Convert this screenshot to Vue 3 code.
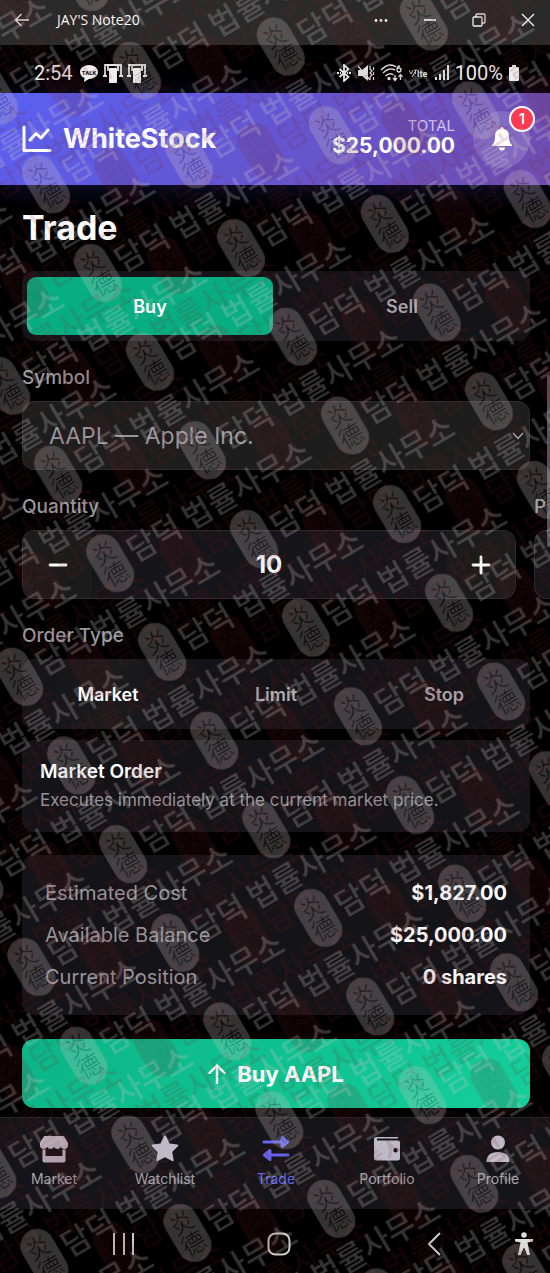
<script setup>
import { ref, computed } from 'vue'

const side = ref('Buy')
const symbol = ref('AAPL')
const quantity = ref(10)
const price = ref('')
const orderType = ref('Market')

const symbols = [
  { code: 'AAPL', name: 'Apple Inc.' },
  { code: 'MSFT', name: 'Microsoft Corp.' },
]
const orderTypes = ['Market', 'Limit', 'Stop']
const summary = computed(() => [
  { label: 'Estimated Cost', value: '$' + (quantity.value * 182.7).toLocaleString('en-US', { minimumFractionDigits: 2, maximumFractionDigits: 2 }) },
  { label: 'Available Balance', value: '$25,000.00' },
  { label: 'Current Position', value: '0 shares' },
])
const tabs = [
  { id: 'shop', label: 'Market' },
  { id: 'star', label: 'Watchlist' },
  { id: 'swap', label: 'Trade' },
  { id: 'wallet', label: 'Portfolio' },
  { id: 'person', label: 'Profile' },
]
const layers = [
  { id: 'red', origin: '170 265' },
  { id: 'grey', origin: '98 273' },
]
const marks = [[18, 31], [154, 82], [-118, 82], [154, -21], [-118, -21]]
</script>

<template>
  <div class="screen">
    <div class="titlebar">
      <button class="plain" aria-label="Back">
        <svg width="16" height="14" viewBox="0 0 16 14" fill="none" stroke="#f4f4f4" stroke-width="1.4"><path d="M15 7H1.5M7.5 1 1.5 7l6 6" /></svg>
      </button>
      <span class="device">JAY'S Note20</span>
      <div class="window-actions">
        <button class="plain" aria-label="More">
          <svg width="14" height="14" viewBox="0 0 14 14" fill="#eee"><circle cx="2" cy="7.500" r="1.400" /><circle cx="7" cy="7.500" r="1.400" /><circle cx="12" cy="7.500" r="1.400" /></svg>
        </button>
        <button class="plain" aria-label="Minimize">
          <svg width="14" height="14" viewBox="0 0 14 14" stroke="#fff" stroke-width="1.600"><path d="M1 7h12" /></svg>
        </button>
        <button class="plain" aria-label="Restore">
          <svg width="14" height="14" viewBox="0 0 14 14" fill="none" stroke="#eee" stroke-width="1.300"><rect x="1" y="4" width="9" height="9" rx="1" /><path d="M4 4V2q0-1 1-1h7q1 0 1 1v7q0 1-1 1h-2" /></svg>
        </button>
        <button class="plain" aria-label="Close">
          <svg width="14" height="14" viewBox="0 0 14 14" stroke="#eee" stroke-width="1.400"><path d="M1 1l12 12M13 1L1 13" /></svg>
        </button>
      </div>
    </div>

    <div class="status">
      <span class="clock">2:54</span>
      <svg width="20" height="18" viewBox="0 0 20 18"><path d="M10 1c5 0 9 3 9 7s-4 7-9 7l-5 3 .5-4C3 13 1 11 1 8c0-4 4-7 9-7z" fill="#eee" /><text x="10" y="10.500" text-anchor="middle" class="talk">TALK</text></svg>
      <svg v-for="n in 2" :key="n" width="20" height="20" viewBox="0 0 20 20"><path d="M2 13V2h16v11M0 13h4M16 13h4M5 2v6M15 2v6" fill="none" stroke="#e4e4e4" stroke-width="1.800" /><rect x="6" y="5" width="8" height="15" rx="1" fill="#eee" /></svg>
      <div class="status-right">
        <svg width="16" height="18" viewBox="0 0 16 18" fill="none" stroke="#eee" stroke-width="1.700"><path d="M3.500 5l9 8L8 17V1l4.500 4-9 8" /><path d="M1 9h2M13 9h2M4 9h1M11 9h1" stroke-width="2" /></svg>
        <svg width="18" height="18" viewBox="0 0 18 18"><path d="M1 6h4l6-5v16l-6-5H1z" fill="#ddd" /><path d="M13 2v3l2 2-2 2 2 2-2 2v3M16.500 3v3M16.500 8v3M16.500 13v3M1 2l12 14" fill="none" stroke="#ddd" stroke-width="1.200" /></svg>
        <svg width="24" height="18" viewBox="0 0 24 18" fill="none" stroke="#ddd" stroke-width="1.500"><path d="M1 6q8-8 15-3M3 9q6-6 12-3M5.500 12q4-4 8-1" /><path d="M20 2q-3 0-3 4 0 2 2 2t2-2-2-2-2 1" stroke-width="1.300" /><circle cx="9" cy="14.500" r="1" /><path d="M15 11v5M13 14l2 2.500 2-2.500M20.500 16v-5M18.500 13l2-2.500 2 2.500" stroke-width="1.300" /></svg>
        <svg width="20" height="18" viewBox="0 0 20 18"><path d="M0 6l2 4 2-4M3 13l4-7M5 6h3M6.500 6v4" stroke="#bbb" fill="none" /><text x="8" y="13" class="lte">lte</text></svg>
        <svg width="16" height="18" viewBox="0 0 16 18" fill="#ddd"><path d="M1 13h2v3H1zM5 10h2v6H5zM9 6h2v10H9zM13 1h2v15h-2z" /></svg>
        <span class="battery">100%</span>
        <svg width="12" height="18" viewBox="0 0 12 18"><path d="M4 1h4v2h2q1 0 1 1v12q0 1-1 1H2q-1 0-1-1V4q0-1 1-1h2z" fill="#eee" /></svg>
      </div>
    </div>

    <header class="header">
      <svg width="30" height="28" viewBox="0 0 30 28" fill="none" stroke="#fff" stroke-linecap="round" stroke-linejoin="round"><path d="M2 2v23.500h26" stroke-width="3" /><path d="M8 15l6-6.500 5 4.500 7-8" stroke-width="3" /></svg>
      <span class="brand">WhiteStock</span>
      <div class="total">
        <span class="total-label">TOTAL</span>
        <span class="total-value">$25,000.00</span>
      </div>
      <button class="bell" aria-label="Notifications">
        <svg width="22" height="24" viewBox="0 0 22 24" fill="#fff"><path d="M11 0c1 0 1.700.8 1.700 1.800C16 2.600 18 5 18 9c0 5 1 7 3 9v1H1v-1c2-2 3-4 3-9 0-4 2-6.400 5.300-7.200C9.300.8 10 0 11 0zM8 20.500h6c0 2-1.300 3-3 3s-3-1-3-3z" /></svg>
        <span class="badge">1</span>
      </button>
    </header>

    <main class="main">
      <h1>Trade</h1>
      <div class="toggle">
        <button :class="{ active: side === 'Buy' }" @click="side = 'Buy'">Buy</button>
        <button :class="{ active: side === 'Sell' }" @click="side = 'Sell'">Sell</button>
      </div>

      <label class="label" for="symbol">Symbol</label>
      <div class="select-wrap">
        <select id="symbol" v-model="symbol" class="field">
          <option v-for="s in symbols" :key="s.code" :value="s.code">{{ s.code }} — {{ s.name }}</option>
        </select>
        <svg class="chevron" width="12" height="8" viewBox="0 0 12 8" fill="none" stroke="#aaa" stroke-width="1.400"><path d="M1 1l5 5.500L11 1" /></svg>
      </div>

      <div class="columns">
        <div class="quantity">
          <label class="label" for="quantity">Quantity</label>
          <div class="field stepper">
            <button aria-label="Decrease" @click="quantity = Math.max(1, quantity - 1)">
              <svg width="20" height="20" viewBox="0 0 20 20" stroke="#fff" stroke-width="2.800" stroke-linecap="round"><path d="M2 10h16" /></svg>
            </button>
            <input id="quantity" v-model.number="quantity" type="text" inputmode="numeric" />
            <button aria-label="Increase" @click="quantity++">
              <svg width="20" height="20" viewBox="0 0 20 20" stroke="#fff" stroke-width="2.800" stroke-linecap="round"><path d="M2 10h16M10 2v16" /></svg>
            </button>
          </div>
        </div>
        <div class="price">
          <label class="label" for="price">Price</label>
          <input id="price" v-model="price" class="field" type="text" />
        </div>
      </div>

      <span id="order-type" class="label">Order Type</span>
      <div class="types" role="group" aria-labelledby="order-type">
        <button v-for="t in orderTypes" :key="t" :class="{ active: t === orderType }" @click="orderType = t">{{ t }}</button>
      </div>

      <section class="info">
        <strong>Market Order</strong>
        <p>Executes immediately at the current market price.</p>
      </section>

      <dl class="summary">
        <div v-for="row in summary" :key="row.label">
          <dt>{{ row.label }}</dt>
          <dd>{{ row.value }}</dd>
        </div>
      </dl>

      <button class="submit">
        <svg width="18" height="20" viewBox="0 0 18 20" fill="none" stroke="#fff" stroke-width="2.400" stroke-linecap="round" stroke-linejoin="round"><path d="M9 19V1.500M1.500 9L9 1.500 16.500 9" /></svg>
        Buy AAPL
      </button>
      <div class="scrollbar"></div>
    </main>

    <nav class="tabs">
      <a v-for="tab in tabs" :key="tab.id" href="#" :class="{ active: tab.id === 'swap' }">
        <svg width="28" height="28" viewBox="0 0 28 28" fill="currentColor">
          <template v-if="tab.id === 'shop'">
            <path d="M5 1h18q1 0 1.500 1L28 8v2q0 4-3.700 4-2.300 0-3.500-2-1.200 2-3.400 2T14 12q-1.200 2-3.400 2T7.200 12Q6 14 3.700 14 0 14 0 10V8l3.500-6Q4 1 5 1z" />
            <path d="M2.500 14.500h3V21h17v-6.500h3V25q0 2.500-2.500 2.500H5Q2.500 27.500 2.500 25z" />
          </template>
          <path v-else-if="tab.id === 'star'" d="M14 .5q.8 0 1.200 1l3.300 7 7.800 1q1.800.4.600 1.800L21.200 17l1.400 7.800q.2 1.900-1.500 1.200L14 22.200 6.900 26q-1.700.7-1.500-1.200L6.800 17 1.100 11.300Q-.1 9.900 1.700 9.500l7.800-1 3.300-7q.4-1 1.200-1z" />
          <g v-else-if="tab.id === 'swap'" stroke="currentColor" stroke-width="3" stroke-linecap="round" stroke-linejoin="round">
            <path d="M2 7h18M20 2.500l5.500 4.500-5.500 4.500zM26 20H8M8 15.500L2.500 20 8 24.500z" />
          </g>
          <path v-else-if="tab.id === 'wallet'" fill-rule="evenodd" d="M3 2h22v1.500H4v2h21q2 0 2 2V23q0 2.500-2.500 2.500h-21Q1 25.500 1 23V4q0-2 2-2zM22.500 13a2.200 2.200 0 1 0 0 4.400 2.200 2.200 0 0 0 0-4.400z" />
          <template v-else>
            <circle cx="14" cy="7.500" r="7" />
            <path d="M2.500 27Q2.500 17 14 17t11.500 10z" />
          </template>
        </svg>
        <span>{{ tab.label }}</span>
      </a>
    </nav>

    <div class="system">
      <button class="plain" aria-label="Recent apps">
        <svg width="24" height="24" viewBox="0 0 24 24" stroke="#ccc" stroke-width="2"><path d="M2 1v22M12 1v22M21 1v22" /></svg>
      </button>
      <button class="plain" aria-label="Home">
        <svg width="24" height="24" viewBox="0 0 24 24" fill="none" stroke="#ccc" stroke-width="2"><rect x="1.500" y="1.500" width="21" height="21" rx="7" /></svg>
      </button>
      <button class="plain" aria-label="Navigate back">
        <svg width="24" height="24" viewBox="0 0 24 24" fill="none" stroke="#ccc" stroke-width="2"><path d="M17 1L6 12l11 11" /></svg>
      </button>
      <button class="plain" aria-label="Accessibility">
        <svg width="20" height="24" viewBox="0 0 20 24" fill="#ddd"><circle cx="10" cy="3" r="2.800" /><path d="M1 7h18v2.500l-5.500 1L16 23h-2.800L10.500 16h-1L6.800 23H4l2.500-12.500L1 9.500z" /></svg>
      </button>
    </div>

    <svg class="watermark" aria-hidden="true">
      <defs>
        <pattern
          v-for="layer in layers"
          :id="layer.id"
          :key="layer.id"
          :class="layer.id"
          width="272.300"
          height="102.800"
          patternUnits="userSpaceOnUse"
          :patternTransform="`translate(${layer.origin}) rotate(-30.4) translate(-18 -31)`"
        >
          <g v-for="[x, y] in marks" :key="`${x},${y}`" :transform="`translate(${x} ${y})`">
            <rect x="-17" y="-31" width="34" height="62" rx="17" />
            <text class="seal" x="0" y="-3">炎</text>
            <text class="seal" x="0" y="21">德</text>
            <text class="firm" x="22" y="12">담덕 법률사무소</text>
          </g>
        </pattern>
      </defs>
      <rect v-for="layer in layers" :key="layer.id" :class="layer.id" width="100%" height="100%" :fill="`url(#${layer.id})`" />
    </svg>
  </div>
</template>

<style>
body {
  margin: 0;
  background: #000;
}
</style>

<style scoped>
* {
  box-sizing: border-box;
}
.screen {
  position: relative;
  overflow: hidden;
  background: #000;
  color: #fff;
  font-family: Inter, "Noto Sans CJK KR", sans-serif;
}
button,
input,
select {
  font-family: inherit;
  margin: 0;
  border: 0;
  padding: 0;
  background: none;
  color: inherit;
  border-radius: 0;
}
svg {
  display: block;
  flex: none;
}
.plain {
  display: flex;
}
.titlebar {
  display: flex;
  align-items: center;
  height: 45px;
  padding: 0 15px 6px 14px;
  background: #2a2a2a;
}
.device {
  margin-left: 27px;
  font: 14px/20px "Open Sans", sans-serif;
}
.window-actions {
  display: flex;
  gap: 35px;
  margin-left: auto;
}
.status {
  display: flex;
  align-items: center;
  gap: 4px;
  height: 48px;
  padding: 8px 30px 0 34px;
  font: 20px/24px Roboto, sans-serif;
  color: #eee;
}
.clock {
  margin-right: 2px;
}
.status-right {
  display: flex;
  align-items: center;
  gap: 5px;
  margin-left: auto;
}
.talk {
  font: 700 6px Roboto, sans-serif;
  fill: #111;
}
.lte {
  font: 700 9px Roboto, sans-serif;
  fill: #ddd;
}
.header {
  display: flex;
  align-items: center;
  height: 92px;
  padding: 0 20px 0 22px;
  background: linear-gradient(135deg, #5a60f2, #704cae);
  box-shadow: 0 4px 24px rgba(70, 70, 220, 0.25);
}
.brand {
  margin-left: 11px;
  font-size: 27px;
  line-height: 36px;
  font-weight: 700;
}
.total {
  display: flex;
  flex-direction: column;
  align-items: flex-end;
  margin-left: auto;
}
.total-label {
  font-size: 15px;
  line-height: 18px;
  color: #d0c4ee;
}
.total-value {
  margin-bottom: 4px;
  font-size: 21px;
  line-height: 22px;
  font-weight: 700;
}
.bell {
  position: relative;
  display: flex;
  align-items: center;
  justify-content: center;
  width: 57px;
  height: 57px;
  margin-left: 18px;
  border-radius: 50%;
  background: rgba(255, 255, 255, 0.15);
}
.badge {
  position: absolute;
  top: -5px;
  right: -5px;
  width: 26px;
  height: 26px;
  border: 2px solid #fff;
  border-radius: 50%;
  background: #fb3b52;
  font-size: 14px;
  line-height: 22px;
  font-weight: 600;
}
.main {
  position: relative;
  padding: 25px 20px 9px 22px;
}
h1 {
  margin: 0 0 25px;
  font-size: 34px;
  line-height: 36px;
  font-weight: 700;
}
.toggle,
.types {
  display: flex;
  height: 70px;
  border-radius: 12px;
  background: #141317;
}
.toggle {
  gap: 6px;
  padding: 6px 5px;
}
.types {
  padding: 0 2px;
}
.toggle button,
.types button {
  flex: 1;
  border-radius: 9px;
  font-size: 18px;
  font-weight: 600;
  color: #aaa8ae;
}
.toggle .active {
  background: #08ae82;
  color: #fff;
}
.types .active {
  background: linear-gradient(90deg, #141317, #1b1b1c, #141317);
  color: #fff;
}
.label {
  display: block;
  margin: 25px 0 11px;
  font-size: 19px;
  line-height: 24px;
  font-weight: 500;
  color: #9a989e;
}
.field {
  display: block;
  width: 100%;
  height: 69px;
  border: 1px solid #2c2b30;
  border-radius: 12px;
  background: #161519;
}
.select-wrap {
  position: relative;
}
select.field {
  appearance: none;
  padding: 0 40px 0 26px;
  background: #1d1d1e;
  font-size: 23px;
  color: #98969b;
}
.chevron {
  position: absolute;
  right: 6px;
  top: 31px;
}
.columns {
  display: flex;
  gap: 18px;
  margin-right: -20px;
  overflow: hidden;
}
.quantity {
  flex: 0 0 calc(100% - 34px);
  min-width: 0;
}
.price {
  flex: 0 0 60%;
}
.stepper {
  display: flex;
  overflow: hidden;
}
.stepper button {
  display: flex;
  align-items: center;
  justify-content: center;
  width: 69px;
  background: #1b1b1b;
}
.stepper input {
  flex: 1;
  min-width: 0;
  text-align: center;
  font-size: 24px;
  font-weight: 700;
}
.info {
  margin-top: 11px;
  padding: 18px;
  border-radius: 12px;
  background: #141317;
  font-size: 19px;
  line-height: 28px;
}
.info strong {
  display: block;
  font-weight: 600;
}
.info p {
  margin: 0;
  font-size: 17px;
  color: #96949a;
}
.summary {
  margin: 23px 0 24px;
  padding: 17px 23px;
  border-radius: 12px;
  background: #141317;
  font-size: 20px;
  line-height: 42px;
}
.summary div {
  display: flex;
  justify-content: space-between;
}
.summary dt {
  color: #96949a;
}
.summary dd {
  margin: 0;
  font-weight: 700;
}
.submit {
  display: flex;
  align-items: center;
  justify-content: center;
  gap: 11px;
  width: 100%;
  height: 69px;
  border-radius: 12px;
  background: linear-gradient(135deg, #0cb486, #14cf9b);
  font-size: 22px;
  font-weight: 700;
}
.scrollbar {
  position: absolute;
  top: 190px;
  right: 0;
  width: 3px;
  height: 172px;
  border-radius: 2px;
  background: #55545a;
}
.tabs {
  display: flex;
  justify-content: space-between;
  height: 92px;
  padding: 17px 20px 0 22px;
  border-top: 1px solid #26252a;
  background: #151418;
}
.tabs a {
  display: flex;
  flex-direction: column;
  align-items: center;
  gap: 6px;
  width: 64px;
  font-size: 14px;
  line-height: 20px;
  text-decoration: none;
  color: #a5a3a9;
}
.tabs svg {
  color: #bdbac6;
}
.tabs .active,
.tabs .active svg {
  color: #6366f1;
}
.system {
  display: flex;
  align-items: center;
  justify-content: space-between;
  height: 64px;
  padding: 6px 16px 0 112px;
}
.system button:nth-child(2) {
  margin: 0 auto 0 131px;
}
.system button:nth-child(3) {
  margin-right: 67px;
}
.watermark {
  position: absolute;
  inset: 0;
  width: 100%;
  height: 100%;
  pointer-events: none;
}
pattern.grey {
  fill: #d4c8ca;
}
pattern.red {
  fill: #7c1820;
}
rect.grey {
  opacity: 0.25;
}
rect.red {
  opacity: 0.15;
}
.seal {
  font: 300 24px "Noto Sans CJK TC", sans-serif;
  text-anchor: middle;
  fill: #000;
  fill-opacity: 0.85;
}
.firm {
  font: 500 31px "Noto Sans CJK KR", sans-serif;
}
</style>
